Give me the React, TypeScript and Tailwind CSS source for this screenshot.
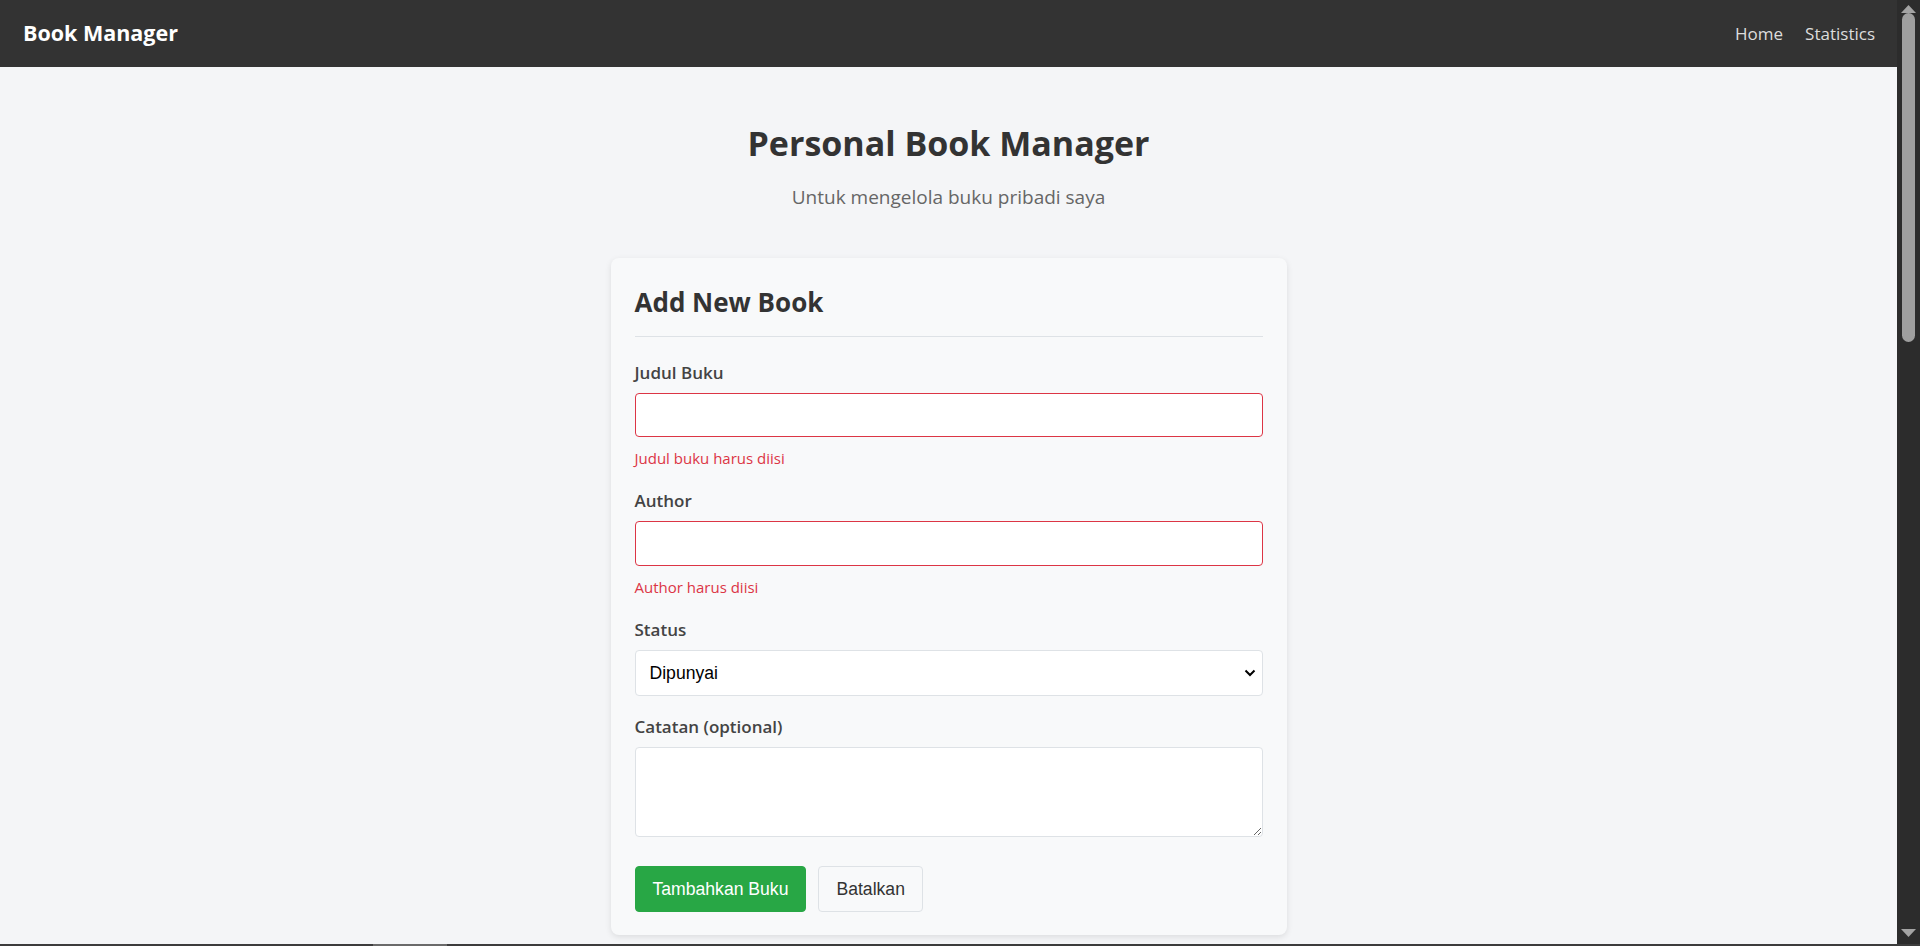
const sans = "font-['Segoe_UI','Open_Sans','Noto_Sans',sans-serif]";
const arial = "font-['Liberation_Sans',Arial,sans-serif]";

const Field = (props: any) => {
  return (
    <div className={props.className}>
      <label className="block h-6 leading-6 text-[17px] font-semibold text-[#444] mb-2">
        {props.label}
      </label>
      {props.children}
      {props.error && (
        <p className="mt-[11px] h-5 leading-5 text-[15px] text-[#dc3545]">{props.error}</p>
      )}
    </div>
  );
};

// window scrollbar as it shows in the screenshot
const ScrollBar = () => {
  return (
    <div className="w-[23px] bg-[#2c2c2c] flex flex-col items-center">
      <svg className="mt-[5px]" width="15" height="8" viewBox="0 0 15 8">
        <path d="M7.5 0 L15 8 L0 8 Z" fill="#a3a3a3" />
      </svg>
      <div className="h-[329px] w-[13px] rounded-full bg-[#9f9f9f]" />
      <div className="flex-1" />
      <svg className="mb-[7px]" width="15" height="8" viewBox="0 0 15 8">
        <path d="M0 0 L15 0 L7.5 8 Z" fill="#a3a3a3" />
      </svg>
    </div>
  );
};

export default function App() {
  return (
    <div className={`${sans} h-[946px] flex flex-col overflow-hidden bg-[#f4f5f7] text-[#333]`}>
      <div className="flex-1 flex min-h-0">
        <div className="flex-1 overflow-hidden">
          <nav className="h-[67px] bg-[#333] flex items-center justify-between pl-[23px] pr-[22px]">
            <span className="text-white text-[21.5px] font-bold">Book Manager</span>
            <div className="flex gap-[22px] text-[17px] text-[#ddd]">
              <a href="#">Home</a>
              <a href="#">Statistics</a>
            </div>
          </nav>

          <main className="pt-[55px]">
            <h1 className="text-center text-[34px] leading-[43px] font-bold text-[#333]">
              Personal Book Manager
            </h1>
            <p className="mt-[19px] text-center text-[19px] leading-[27px] text-[#666]">
              Untuk mengelola buku pribadi saya
            </p>

            <div className="mx-auto mt-[47px] w-[676px] bg-[#f8f9fa] rounded-lg shadow-[0_2px_6px_rgba(0,0,0,0.1)] px-6 pt-6 pb-[23px]">
              <h2 className="h-10 leading-10 text-[26px] font-bold text-[#333]">Add New Book</h2>
              <div className="mt-[14px] border-b border-[#dee2e6]" />

              <Field className="mt-6" label="Judul Buku" error="Judul buku harus diisi">
                <input className="block w-full h-11 rounded border border-[#dc3545] bg-white px-3 outline-none" />
              </Field>
              <Field className="mt-[21px]" label="Author" error="Author harus diisi">
                <input className="block w-full h-[45px] rounded border border-[#dc3545] bg-white px-3 outline-none" />
              </Field>
              <Field className="mt-[21px]" label="Status">
                <div className="relative">
                  <select className={`${arial} block w-full h-[46px] appearance-none rounded border border-[#dee2e6] bg-white px-[14px] text-[17.6px] text-black outline-none`}>
                    <option>Dipunyai</option>
                    <option>Sedang Dibaca</option>
                    <option>Ingin Dibeli</option>
                  </select>
                  <svg className="absolute right-[7px] top-[19px] pointer-events-none" width="12" height="8" viewBox="0 0 12 8">
                    <path d="M1.5 1.5 L6 6 L10.5 1.5" fill="none" stroke="#000" strokeWidth="2" />
                  </svg>
                </div>
              </Field>
              <Field className="mt-[19px]" label="Catatan (optional)">
                <textarea className="block w-full h-[90px] rounded border border-[#dee2e6] bg-white px-3 py-2 outline-none" />
              </Field>

              <div className={`${arial} mt-[29px] flex gap-3`}>
                <button className="h-[46px] px-[17px] rounded bg-[#28a745] border border-[#28a745] text-white text-[17.6px]">
                  Tambahkan Buku
                </button>
                <button className="h-[46px] px-[17px] rounded bg-[#f8f9fa] border border-[#dee2e6] text-[#333] text-[17.6px]">
                  Batalkan
                </button>
              </div>
            </div>
          </main>
        </div>
        <ScrollBar />
      </div>
      <div className="h-[2px] bg-[#3c3c3c] flex">
        <div className="ml-[373px] w-[74px] bg-[#6a6a6a]" />
      </div>
    </div>
  );
}
